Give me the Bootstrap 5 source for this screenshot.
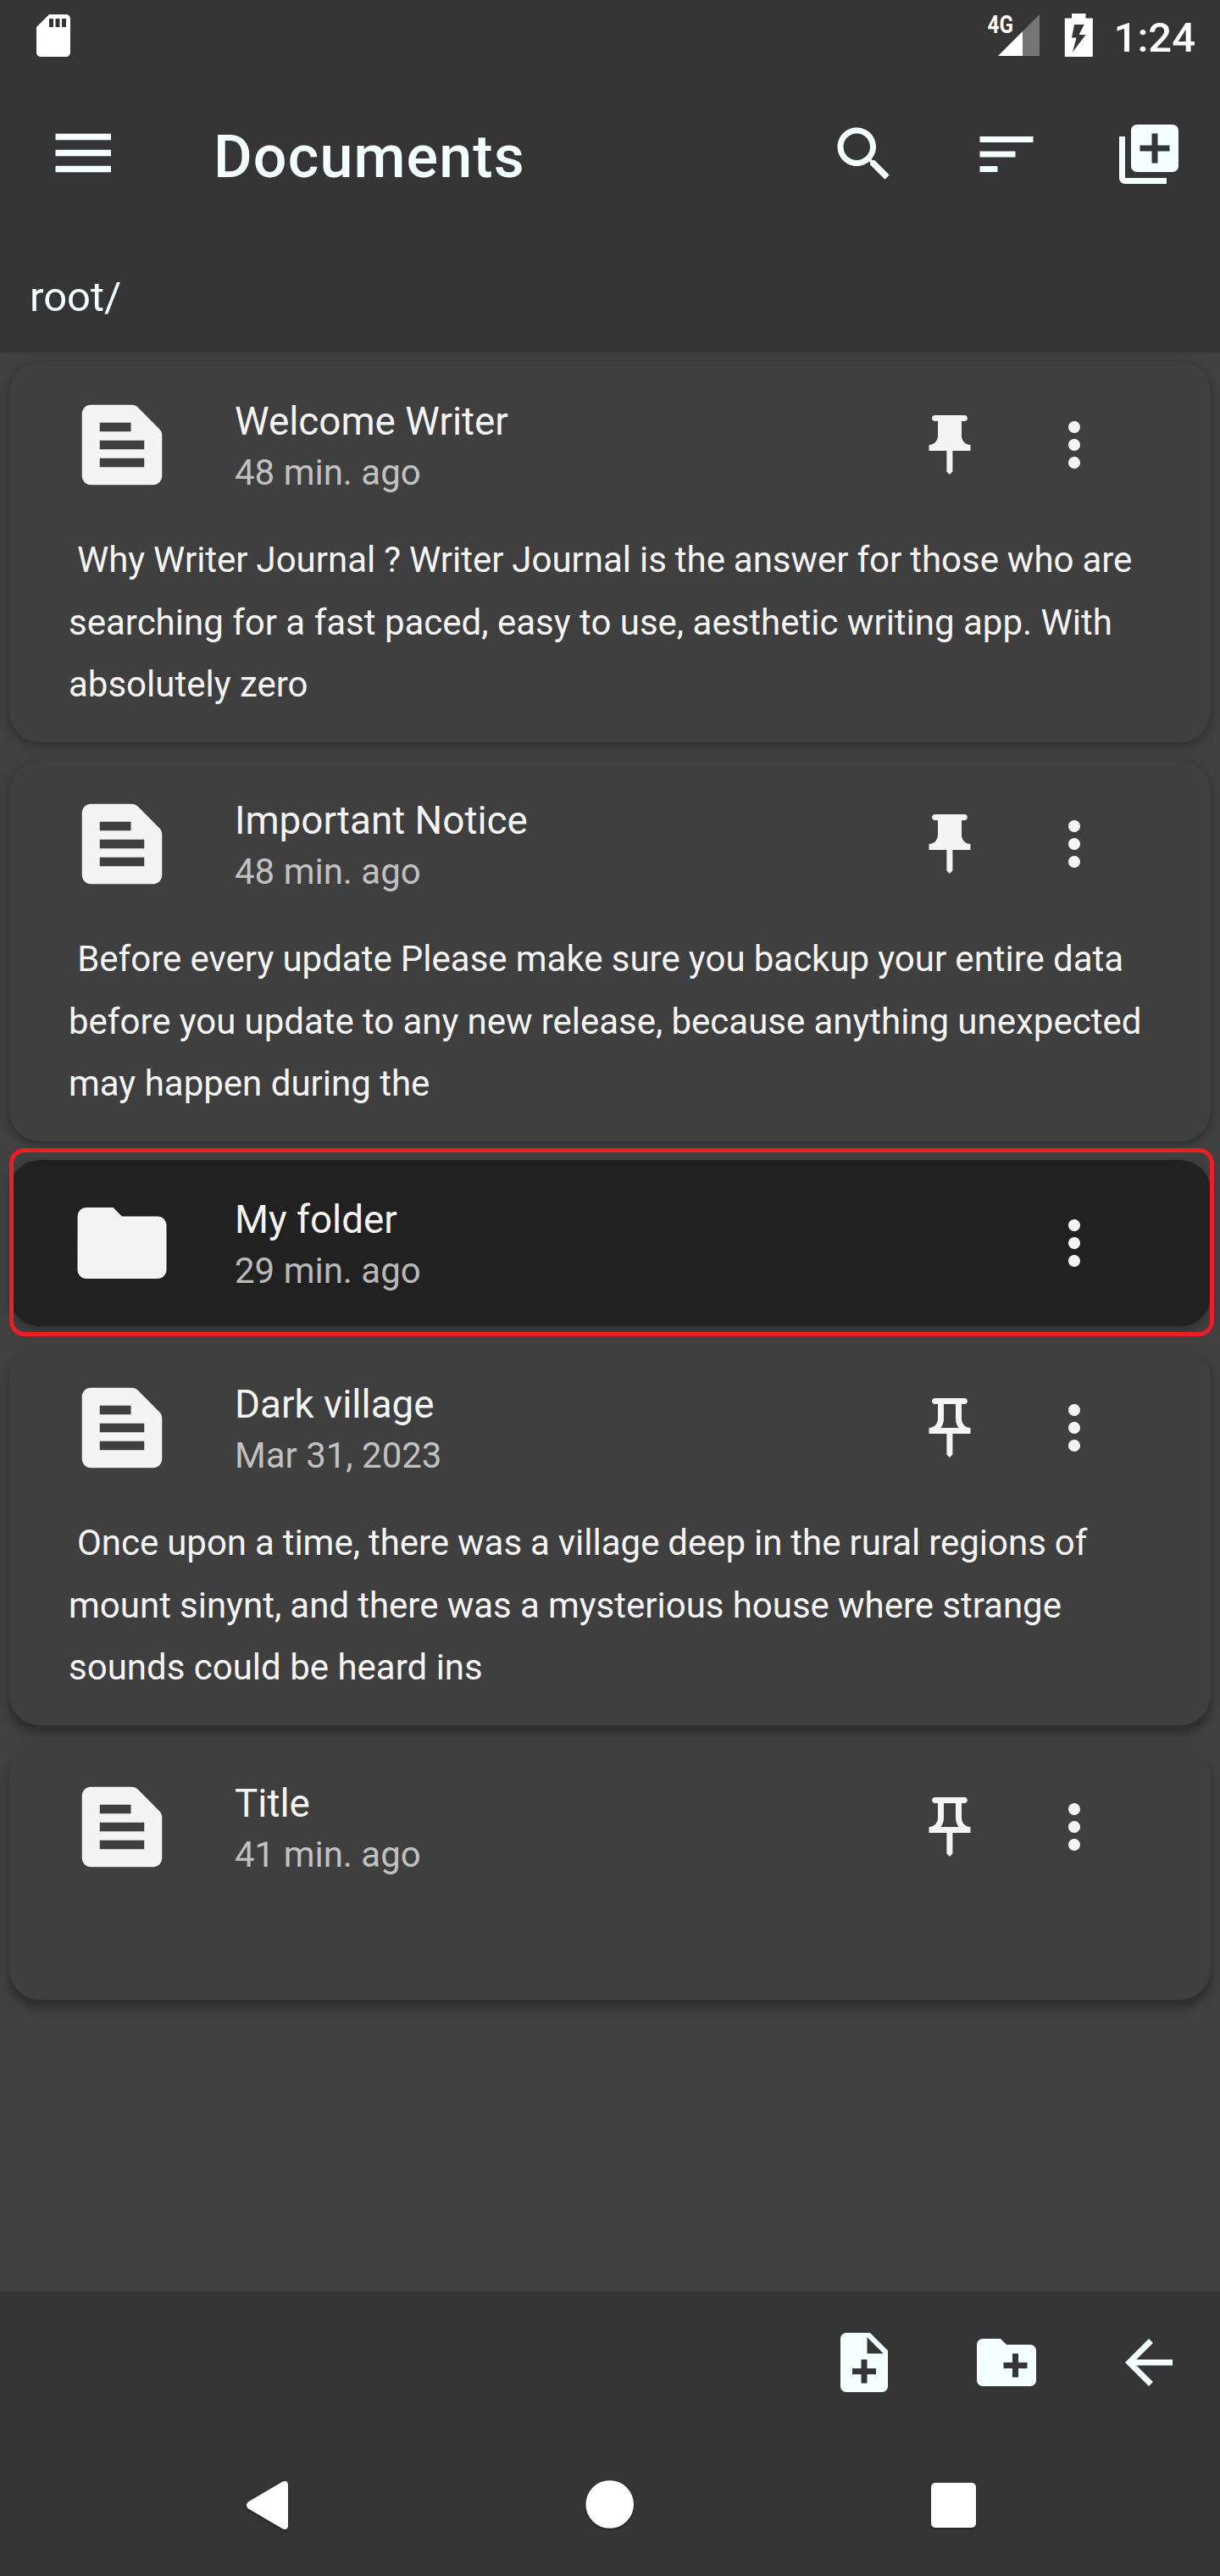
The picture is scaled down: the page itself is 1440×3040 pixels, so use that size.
<!DOCTYPE html>
<html lang="en">
<head>
<meta charset="utf-8">
<meta name="viewport" content="width=device-width, initial-scale=1">
<title>Documents</title>
<link href="https://cdn.jsdelivr.net/npm/bootstrap@5.3.0/dist/css/bootstrap.min.css" rel="stylesheet">
<style>
  :root { --bar: #353535; --page: #404040; --card: #3f3f3f; --azure: #f4ffff; --ink: #f4f4f4; }
  body { background: var(--page); color: var(--ink); font-family: Roboto, "Liberation Sans", sans-serif; }
  svg { display: block; fill: currentColor; flex: none; }
  .screen { width: 1440px; height: 3040px; overflow: hidden; }
  .bar-bg { background: var(--bar); color: var(--azure); }
  .status-bar { height: 84px; padding: 0 29px 0 33px; color: #fff; }
  .status-bar .clock { font-size: 49px; font-weight: 500; line-height: 58px; padding-top: 5px; }
  .app-bar { height: 196px; padding: 0 42px 0 56px; }
  .app-title { font-size: 70px; font-weight: 500; line-height: 84px; padding-top: 6px; margin: 0 0 0 112px; letter-spacing: 1.15px; }
  .tools { gap: 84px; }
  .icon-btn { padding: 0; border: 0; color: inherit; border-radius: 0; line-height: 1; }
  .path-row { height: 136px; padding: 6px 35px 0; font-size: 49px; line-height: 58px; }
  .doc-list { padding: 11px; gap: 22px; }
  .doc { background: var(--card); color: var(--ink); border: 0; border-radius: 36px; box-shadow: 0 3px 10px 1px rgba(0,0,0,.28); }
  .doc.dir { background: #212121; }
  .doc.low { box-shadow: 0 9px 10px 1px rgba(0,0,0,.28); }
  .doc-head { height: 196px; padding: 0 119px 0 70px; }
  .doc-meta { padding-top: 40px; margin-left: 70px; }
  .doc-name { font-size: 45.8px; line-height: 62px; margin: 0; font-weight: 400; }
  .doc-time { font-size: 42px; line-height: 58px; color: rgba(244,244,244,.72); }
  .doc-acts { gap: 63px; }
  .doc-text { padding: 1px 60px 31.5px 70px; font-size: 42px; line-height: 73.5px; margin: 0; white-space: pre; min-height: 106px; }
  .snug { word-spacing: -.26px; }
  .tight { word-spacing: -.52px; }
  .marker { position: absolute; left: 0; right: -4px; top: -14px; bottom: -12px; border: 5px solid #ee1c24; border-radius: 18px; }
  .foot-tools { height: 168px; padding-right: 42px; }
  .sys-nav { height: 168px; color: #fff; }
  .sys-nav svg { filter: drop-shadow(0 2px 1px rgba(0,0,0,.3)); }
</style>
</head>
<body>
<svg width="0" height="0" class="position-absolute" aria-hidden="true">
  <symbol id="i-doc" viewBox="0 0 24 24"><path d="M20.41 8.41l-4.83-4.83C15.21 3.21 14.7 3 14.17 3H5C3.9 3 3 3.9 3 5v14c0 1.1.9 2 2 2h14c1.1 0 2-.9 2-2V9.83C21 9.3 20.79 8.79 20.41 8.41zM7 7h7v2H7V7zM17 17H7v-2h10V17zM17 13H7v-2h10V13z"/></symbol>
  <symbol id="i-folder" viewBox="0 0 24 24"><path d="M10 4H4c-1.1 0-1.99.9-1.99 2L2 18c0 1.1.9 2 2 2h16c1.1 0 2-.9 2-2V8c0-1.1-.9-2-2-2h-8l-2-2z"/></symbol>
  <symbol id="i-pin" viewBox="0 0 24 24"><path d="M16 9V4h1c.55 0 1-.45 1-1s-.45-1-1-1H7c-.55 0-1 .45-1 1s.45 1 1 1h1v5c0 1.66-1.34 3-3 3v2h5.97v7l1 1 1-1v-7H19v-2c-1.66 0-3-1.34-3-3z"/></symbol>
  <symbol id="i-pin-o" viewBox="0 0 24 24"><path fill-rule="evenodd" d="M14 4v5c0 1.12.37 2.16 1 3H9c.65-.86 1-1.9 1-3V4h4zM17 2H7c-.55 0-1 .45-1 1s.45 1 1 1h1v5c0 1.66-1.34 3-3 3v2h5.97v7l1 1 1-1v-7H19v-2c-1.66 0-3-1.34-3-3V4h1c.55 0 1-.45 1-1s-.45-1-1-1z"/></symbol>
  <symbol id="i-more" viewBox="0 0 24 24"><path d="M12 8c1.1 0 2-.9 2-2s-.9-2-2-2-2 .9-2 2 .9 2 2 2zm0 2c-1.1 0-2 .9-2 2s.9 2 2 2 2-.9 2-2-.9-2-2-2zm0 6c-1.1 0-2 .9-2 2s.9 2 2 2 2-.9 2-2-.9-2-2-2z"/></symbol>
</svg>

<div class="screen d-flex flex-column">
  <header class="bar-bg">
    <div class="status-bar d-flex align-items-center justify-content-between">
      <svg width="60" height="60" viewBox="0 0 24 24"><path d="M18 2h-8L4.02 8 4 20c0 1.1.9 2 2 2h12c1.1 0 2-.9 2-2V4c0-1.1-.9-2-2-2zm-6 6h-2V4h2v4zm3 0h-2V4h2v4zm3 0h-2V4h2v4z"/></svg>
      <div class="d-flex align-items-center">
        <svg width="151" height="84" viewBox="1164 0 151 84">
          <text x="1165.500" y="39" font-size="29.5" font-weight="700" textLength="30.500" lengthAdjust="spacingAndGlyphs">4G</text>
          <path d="M1207 37L1227 17V66H1207z" fill="#757575"/>
          <path d="M1178 66L1207 37V66z"/>
          <path fill-rule="evenodd" d="M1265 16h16.500v5.500h8.300V67h-33V21.500h8.200zM1268 29L1265 44.500H1270.500L1266 61.500L1281.500 41H1273.500L1279.700 29z"/>
        </svg>
        <span class="clock">1:24</span>
      </div>
    </div>
    <div class="app-bar d-flex align-items-center">
      <button class="btn icon-btn" aria-label="Menu"><svg width="84" height="84" viewBox="56 140 84 84"><path d="M65.500 157.700H131v7.500H65.500zM65.500 176.700H131v7.500H65.500zM65.500 195.700H131v7.500H65.500z"/></svg></button>
      <h1 class="app-title">Documents</h1>
      <div class="tools d-flex ms-auto">
        <button class="btn icon-btn" aria-label="Search"><svg width="84" height="84" viewBox="0 0 24 24"><path d="M15.500 14h-.79l-.28-.27C15.410 12.590 16 11.110 16 9.500 16 5.910 13.090 3 9.500 3S3 5.910 3 9.500 5.910 16 9.500 16c1.610 0 3.090-.59 4.230-1.570l.27.28v.79l5 4.990L20.490 19l-4.990-5zm-6 0C7.010 14 5 11.990 5 9.500S7.010 5 9.500 5 14 7.010 14 9.500 11.990 14 9.500 14z"/></svg></button>
        <button class="btn icon-btn" aria-label="Sort"><svg width="84" height="84" viewBox="0 0 24 24"><path d="M3 18h6v-2H3v2zM3 6v2h18V6H3zm0 7h12v-2H3v2z"/></svg></button>
        <button class="btn icon-btn" aria-label="Add"><svg width="84" height="84" viewBox="0 0 24 24"><path d="M4 6H2v14c0 1.100.9 2 2 2h14v-2H4V6zm16-4H8c-1.100 0-2 .9-2 2v12c0 1.100.9 2 2 2h12c1.100 0 2-.9 2-2V4c0-1.100-.9-2-2-2zm-1 9h-4v4h-2v-4H9V9h4V5h2v4h4v2z"/></svg></button>
      </div>
    </div>
    <div class="path-row d-flex align-items-center">root/</div>
  </header>

  <main class="doc-list d-flex flex-column flex-grow-1">
    <article class="card doc">
      <div class="doc-head d-flex align-items-center">
        <svg width="126" height="126"><use href="#i-doc"/></svg>
        <div class="doc-meta align-self-start flex-grow-1"><h2 class="doc-name">Welcome Writer</h2><div class="doc-time">48 min. ago</div></div>
        <div class="doc-acts d-flex"><svg width="84" height="84"><use href="#i-pin"/></svg><svg width="84" height="84"><use href="#i-more"/></svg></div>
      </div>
      <p class="doc-text"><span class="tight"> Why Writer Journal ? Writer Journal is the answer for those who are</span>
searching for a fast paced, easy to use, aesthetic writing app. With
absolutely zero</p>
    </article>

    <article class="card doc">
      <div class="doc-head d-flex align-items-center">
        <svg width="126" height="126"><use href="#i-doc"/></svg>
        <div class="doc-meta align-self-start flex-grow-1"><h2 class="doc-name">Important Notice</h2><div class="doc-time">48 min. ago</div></div>
        <div class="doc-acts d-flex"><svg width="84" height="84"><use href="#i-pin"/></svg><svg width="84" height="84"><use href="#i-more"/></svg></div>
      </div>
      <p class="doc-text"><span class="snug"> Before every update Please make sure you backup your entire data
before you update to any new release, because anything unexpected</span>
may happen during the</p>
    </article>

    <article class="card doc dir">
      <div class="doc-head d-flex align-items-center">
        <svg width="126" height="126"><use href="#i-folder"/></svg>
        <div class="doc-meta align-self-start flex-grow-1"><h2 class="doc-name">My folder</h2><div class="doc-time">29 min. ago</div></div>
        <div class="doc-acts d-flex"><svg width="84" height="84"><use href="#i-more"/></svg></div>
      </div>
      <div class="marker"></div>
    </article>

    <article class="card doc low">
      <div class="doc-head d-flex align-items-center">
        <svg width="126" height="126"><use href="#i-doc"/></svg>
        <div class="doc-meta align-self-start flex-grow-1"><h2 class="doc-name">Dark village</h2><div class="doc-time">Mar 31, 2023</div></div>
        <div class="doc-acts d-flex"><svg width="84" height="84"><use href="#i-pin-o"/></svg><svg width="84" height="84"><use href="#i-more"/></svg></div>
      </div>
      <p class="doc-text"><span class="tight"> Once upon a time, there was a village deep in the rural regions of</span>
<span class="snug">mount sinynt, and there was a mysterious house where strange</span>
sounds could be heard ins</p>
    </article>

    <article class="card doc low">
      <div class="doc-head d-flex align-items-center">
        <svg width="126" height="126"><use href="#i-doc"/></svg>
        <div class="doc-meta align-self-start flex-grow-1"><h2 class="doc-name">Title</h2><div class="doc-time">41 min. ago</div></div>
        <div class="doc-acts d-flex"><svg width="84" height="84"><use href="#i-pin-o"/></svg><svg width="84" height="84"><use href="#i-more"/></svg></div>
      </div>
      <p class="doc-text"></p>
    </article>
  </main>

  <footer class="bar-bg">
    <div class="foot-tools tools d-flex align-items-center justify-content-end">
      <button class="btn icon-btn" aria-label="New document"><svg width="84" height="84" viewBox="0 0 24 24"><path d="M14 2H6c-1.100 0-1.990.9-1.990 2L4 20c0 1.100.89 2 1.990 2H18c1.100 0 2-.9 2-2V8l-6-6zm2 14h-3v3h-2v-3H8v-2h3v-3h2v3h3v2zm-3-7V3.500L18.500 9H13z"/></svg></button>
      <button class="btn icon-btn" aria-label="New folder"><svg width="84" height="84" viewBox="0 0 24 24"><path d="M20 6h-8l-2-2H4c-1.110 0-1.990.89-1.990 2L2 18c0 1.110.89 2 2 2h16c1.110 0 2-.89 2-2V8c0-1.110-.89-2-2-2zm-1 8h-3v3h-2v-3h-3v-2h3V9h2v3h3v2z"/></svg></button>
      <button class="btn icon-btn" aria-label="Back"><svg width="84" height="84" viewBox="0 0 24 24"><path d="M20 11H7.830l5.590-5.590L12 4l-8 8 8 8 1.410-1.410L7.830 13H20v-2z"/></svg></button>
    </div>
    <nav class="sys-nav">
      <svg width="1440" height="168" viewBox="0 2872 1440 168">
        <path d="M293 2952.500L333 2929Q340 2926 340 2933V2980Q340 2987 333 2984L293 2960.500Q289 2956.500 293 2952.500z"/>
        <circle cx="719.700" cy="2955.500" r="28.300"/>
        <rect x="1099" y="2930" width="53" height="53" rx="5"/>
      </svg>
    </nav>
  </footer>
</div>
<script src="https://cdn.jsdelivr.net/npm/bootstrap@5.3.0/dist/js/bootstrap.bundle.min.js"></script>
</body>
</html>
